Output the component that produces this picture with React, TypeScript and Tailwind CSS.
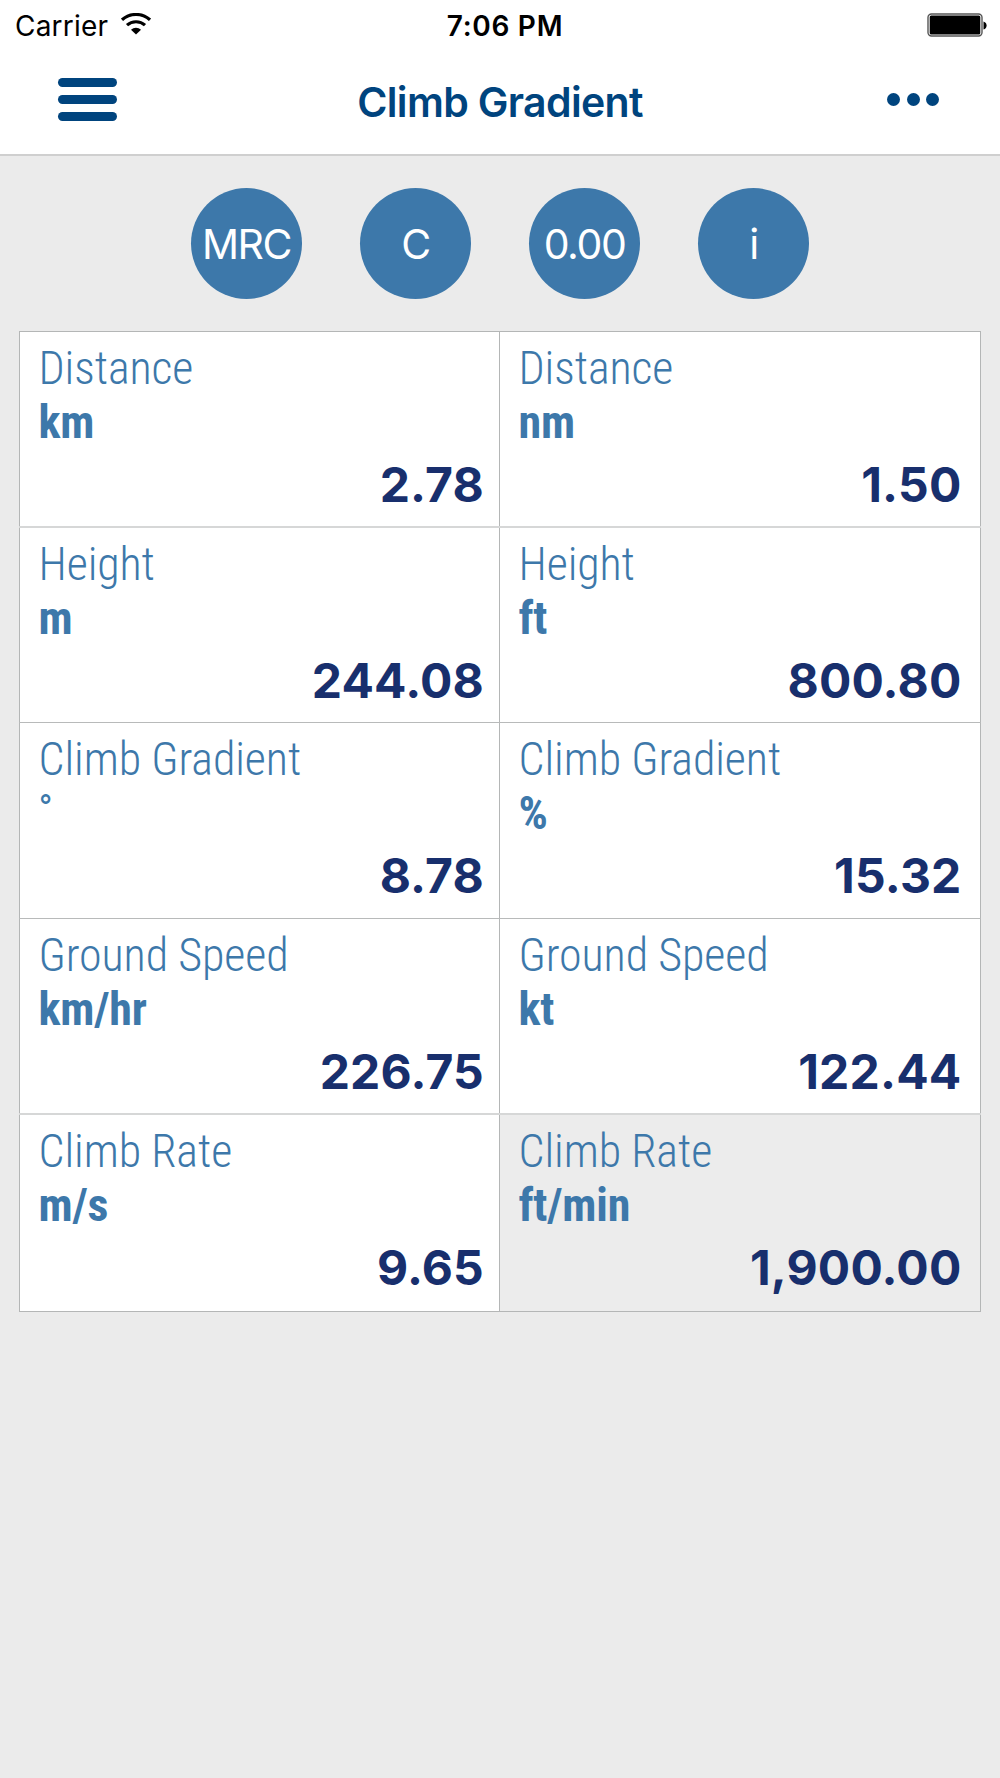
interface Reading {
  label: string;
  unit: string;
  value: string;
  active?: boolean;
}

const rows: Reading[][] = [
  [
    { label: "Distance", unit: "km", value: "2.78" },
    { label: "Distance", unit: "nm", value: "1.50" },
  ],
  [
    { label: "Height", unit: "m", value: "244.08" },
    { label: "Height", unit: "ft", value: "800.80" },
  ],
  [
    { label: "Climb Gradient", unit: "°", value: "8.78" },
    { label: "Climb Gradient", unit: "%", value: "15.32" },
  ],
  [
    { label: "Ground Speed", unit: "km/hr", value: "226.75" },
    { label: "Ground Speed", unit: "kt", value: "122.44" },
  ],
  [
    { label: "Climb Rate", unit: "m/s", value: "9.65" },
    { label: "Climb Rate", unit: "ft/min", value: "1,900.00", active: true },
  ],
];

const rowBorders = [
  "border-t border-[#b4b6b6]",
  "border-t-2 border-[#d6d7d7]",
  "border-t border-[#b8baba]",
  "border-t border-[#b8baba]",
  "border-t-2 border-[#d6d7d7]",
];

const actions = ["MRC", "C", "0.00", "i"];

function StatusBar() {
  return (
    <div className="grid h-[50px] grid-cols-3 items-center text-black">
      <div className="flex items-center gap-[13px] pl-[15px]">
        <span className="pt-px text-[28px] leading-[50px] tracking-[0.2px]">Carrier</span>
        <svg className="-mt-[3px] h-[22px] w-[30px]" viewBox="0 0 30 22" fill="none" stroke="black">
          <path d="M1 6.8C9 -.3 21 -.3 29 6.8" strokeWidth="3.2" />
          <path d="M6 12.1C11 7.6 19 7.6 24 12.1" strokeWidth="3.2" />
          <path d="M10 16.7C12.8 14 17.2 14 20 16.7L15 21.4Z" fill="black" stroke="none" />
        </svg>
      </div>
      <span className="pt-px pl-2.5 text-center text-[28px] leading-[50px] font-semibold tracking-[0.7px]">
        7:06 PM
      </span>
      <div className="-mt-0.5 flex justify-end pr-[13px]">
        <svg className="h-6 w-[60px]" viewBox="0 0 60 24">
          <rect x="1" y="1" width="54" height="22" rx="3.5" fill="white" stroke="#555" strokeWidth="1.4" />
          <rect x="2.7" y="2.6" width="50.6" height="19" rx="1.5" fill="black" />
          <path d="M56.5 8.5Q59.6 9.5 59.6 12.5Q59.6 15.5 56.5 16.5Z" fill="black" />
        </svg>
      </div>
    </div>
  );
}

function NavBar() {
  return (
    <header className="grid h-[104px] grid-cols-[200px_1fr_200px] items-start text-[#00447e]">
      <button type="button" className="mt-[28px] ml-[58px] flex w-[59px] flex-col gap-2">
        <span className="h-[9px] w-full rounded-full bg-[#00447e]" />
        <span className="h-[9px] w-full rounded-full bg-[#00447e]" />
        <span className="h-[9px] w-full rounded-full bg-[#00447e]" />
      </button>
      <h1 className="mt-[26px] text-center text-[41px] leading-[52px] font-semibold tracking-[-0.65px]">
        Climb Gradient
      </h1>
      <button type="button" className="mt-[42.5px] mr-[61px] flex justify-end gap-[6.3px]">
        <span className="size-[13px] rounded-full bg-[#00447e]" />
        <span className="size-[13px] rounded-full bg-[#00447e]" />
        <span className="size-[13px] rounded-full bg-[#00447e]" />
      </button>
    </header>
  );
}

function ReadingCell({ label, unit, value, active }: Reading) {
  return (
    <div
      className={`flex h-full flex-col border-l border-[#b4b6b6] pt-[9px] pl-[18.5px] first:pr-[15px] last:border-r last:pr-[18.5px] ${
        active ? "bg-[#ececec]" : "bg-white"
      }`}
    >
      <span className="font-['Roboto_Condensed','Roboto',sans-serif] text-[46px] leading-[54px] font-light tracking-[-0.1px] text-[#3d78aa] [font-stretch:75%]">
        {label}
      </span>
      {unit === "°" ? (
        <span className="pb-2 font-['Roboto',sans-serif] text-[38px] leading-[46px] text-[#3d78aa]">
          {unit}
        </span>
      ) : (
        <span className="font-['Roboto_Condensed','Roboto',sans-serif] text-[46px] leading-[54px] font-bold tracking-[-0.2px] text-[#3d78aa] [font-stretch:75%]">
          {unit}
        </span>
      )}
      <span className="mt-2 text-right text-[48px] leading-[56px] font-bold tracking-[0.2px] text-[#182f6d]">
        {value}
      </span>
    </div>
  );
}

export default function App() {
  return (
    <div className="min-h-[1778px] w-[1000px] overflow-hidden bg-[#ebebeb] font-['Inter',sans-serif]">
      <div className="h-[156px] border-b-2 border-[#cfcfcf] bg-white">
        <StatusBar />
        <NavBar />
      </div>
      <div className="flex h-[175px] justify-center gap-[58px] pt-8">
        {actions.map((action) => (
          <button
            key={action}
            type="button"
            className="flex size-[111px] items-center justify-center rounded-full bg-[#3d78aa] pt-0.5 text-[41px] font-normal tracking-[-1.4px] text-white"
          >
            {action}
          </button>
        ))}
      </div>
      <main className="mx-[19px] grid w-[962px] grid-rows-[195px_196px_196px_195px_198px] border-b border-[#b4b6b6]">
        {rows.map((row, i) => (
          <section key={row[0].label} className={`grid grid-cols-[480px_482px] ${rowBorders[i]}`}>
            {row.map((reading) => (
              <ReadingCell key={reading.unit} {...reading} />
            ))}
          </section>
        ))}
      </main>
    </div>
  );
}
